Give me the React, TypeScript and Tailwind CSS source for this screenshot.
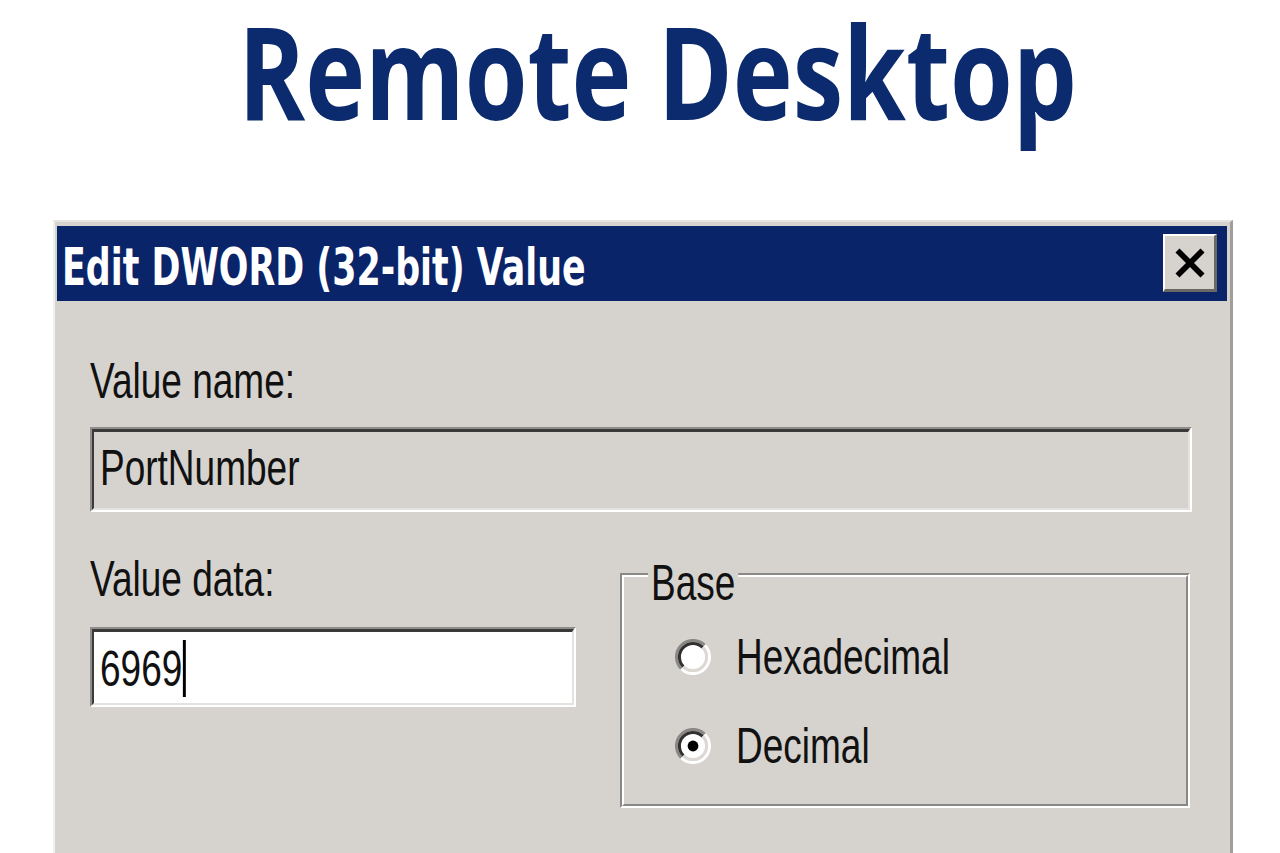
import React from "react";

const sans = { fontFamily: '"Liberation Sans", Arial, sans-serif' };

function Radio({ checked }: { checked?: boolean }) {
  return (
    <svg width="36" height="36" viewBox="0 0 12 12" className="shrink-0">
      <circle cx="6" cy="6" r="5" fill="#ffffff" />
      <path d="M2.1 9.9 A5.5 5.5 0 0 1 9.9 2.1" fill="none" stroke="#8a8884" strokeWidth="1" />
      <path d="M2.8 9.2 A4.5 4.5 0 0 1 9.2 2.8" fill="none" stroke="#303030" strokeWidth="1" />
      <path d="M9.9 2.1 A5.5 5.5 0 0 1 2.1 9.9" fill="none" stroke="#ffffff" strokeWidth="1" />
      <path d="M9.2 2.8 A4.5 4.5 0 0 1 2.8 9.2" fill="none" stroke="#dcd9d4" strokeWidth="1" />
      {checked && <circle cx="6" cy="6" r="1.8" fill="#000000" />}
    </svg>
  );
}

function Label({ children, className = "" }: { children: React.ReactNode; className?: string }) {
  return (
    <span
      className={"inline-block origin-left scale-x-[0.74] whitespace-nowrap text-[50px] leading-none text-[#111111] " + className}
      style={sans}
    >
      {children}
    </span>
  );
}

export default function App() {
  return (
    <div className="w-[1280px] h-[853px] overflow-hidden bg-white">
      {/* Heading */}
      <div className="h-[220px] pt-[5px] pl-[35px] text-center">
        <span
          className="inline-block scale-x-[0.78] whitespace-nowrap text-[130px] font-bold leading-none text-[#0c2a6e]"
          style={{ fontFamily: '"Open Sans", sans-serif' }}
        >
          Remote Desktop
        </span>
      </div>

      {/* Dialog */}
      <div className="ml-[53px] w-[1180px] h-[633px] border-t-2 border-l-2 border-r-[3px] border-t-[#e6e4e0] border-l-[#f2f1ef] border-r-[#a09e9a] bg-[#d6d3ce] pt-[4px] pl-[2px] pr-[3px]">
        {/* Title bar */}
        <div className="flex h-[75px] items-start justify-between bg-[#0a246a] pl-[5px] pr-[10px]">
          <span
            className="mt-[15px] inline-block origin-left scale-x-[0.67] whitespace-nowrap text-[52px] font-bold leading-none text-white"
            style={{ fontFamily: '"DejaVu Sans", Tahoma, sans-serif' }}
          >
            Edit DWORD (32-bit) Value
          </span>
          <div className="mt-[8px] flex h-[58px] w-[54px] items-center justify-center border-t-2 border-l-2 border-b-[3px] border-r-[3px] border-t-white border-l-white border-b-[#6a6864] border-r-[#6a6864] bg-[#d6d3ce]">
            <svg width="30" height="30" viewBox="0 0 10 10">
              <path d="M1.5 1.5 L8.5 8.5 M8.5 1.5 L1.5 8.5" stroke="#000000" strokeWidth="1.9" strokeLinecap="square" />
            </svg>
          </div>
        </div>

        {/* Body */}
        <div className="pl-[33px] pt-[55px]">
          <Label>Value name:</Label>

          <div className="mt-[21px] h-[85px] w-[1102px] border-t-2 border-l-2 border-b-2 border-r-2 border-t-[#8f8d89] border-l-[#8f8d89] border-b-white border-r-white">
            <div className="h-full border-t-[3px] border-l-2 border-b-2 border-r-2 border-t-[#3a3a3a] border-l-[#3a3a3a] border-b-[#e4e2de] border-r-[#e4e2de] bg-[#d6d3ce] pl-[6px] pt-[11px]">
              <Label>PortNumber</Label>
            </div>
          </div>

          <div className="mt-[42px] flex items-start">
            <div className="w-[486px]">
              <Label>Value data:</Label>
              <div className="mt-[23px] h-[80px] w-[486px] border-t-2 border-l-2 border-b-2 border-r-2 border-t-[#8f8d89] border-l-[#8f8d89] border-b-white border-r-white">
                <div className="h-full border-t-[3px] border-l-2 border-b-2 border-r-2 border-t-[#3a3a3a] border-l-[#3a3a3a] border-b-[#e4e2de] border-r-[#e4e2de] bg-white pl-[6px] pt-[12px]">
                  <span
                    className="relative inline-block origin-left scale-x-[0.74] whitespace-nowrap text-[50px] leading-none text-[#111111]"
                    style={sans}
                  >
                    6969
                    <span className="absolute -right-[5px] top-[-4px] h-[57px] w-[4px] bg-black" />
                  </span>
                </div>
              </div>
            </div>

            {/* Group box */}
            <div className="relative ml-[44px] mt-[19px] h-[235px] w-[570px] border-2 border-t-[#8a8884] border-l-[#8a8884] border-b-white border-r-white">
              <div className="h-full border-2 border-t-white border-l-white border-b-[#8a8884] border-r-[#8a8884] pl-[51px] pt-[55px]">
                <div className="flex items-center">
                  <Radio />
                  <span className="ml-[25px]">
                    <Label>Hexadecimal</Label>
                  </span>
                </div>
                <div className="mt-[39px] flex items-center">
                  <Radio checked />
                  <span className="ml-[25px]">
                    <Label>Decimal</Label>
                  </span>
                </div>
              </div>
              <span
                className="absolute left-[26px] top-[-17px] inline-block origin-left scale-x-[0.74] whitespace-nowrap bg-[#d6d3ce] px-[4px] text-[50px] leading-none text-[#111111]"
                style={sans}
              >
                Base
              </span>
            </div>
          </div>
        </div>
      </div>
    </div>
  );
}
